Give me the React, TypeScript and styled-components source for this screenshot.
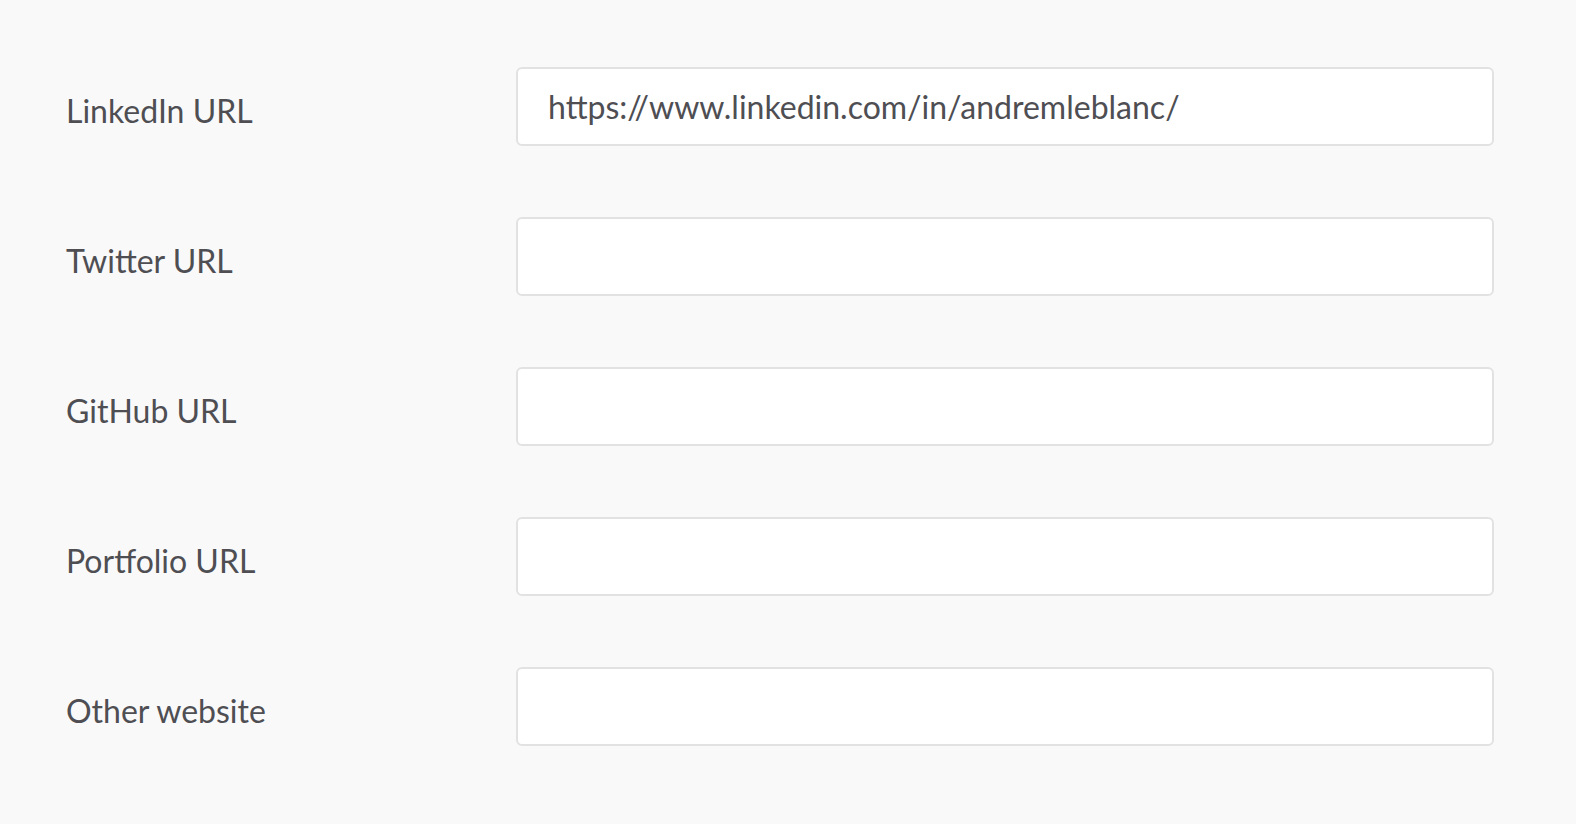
import React from "react";
import styled, { createGlobalStyle } from "styled-components";

const Global = createGlobalStyle`
  html, body { margin: 0; padding: 0; background: #f9f9f9; }
  body { font-family: Lato, "Open Sans", sans-serif; }
`;

const Page = styled.div`
  padding: 67px 82px 60px 66px;
  display: flex;
  flex-direction: column;
  gap: 71px;
`;

const Row = styled.div`
  display: grid;
  grid-template-columns: 450px 1fr;
  align-items: center;
`;

const Label = styled.label`
  font-family: Lato, sans-serif;
  font-size: 32px;
  color: #4e4e53;
  padding-top: 7px;
`;

const Input = styled.input`
  box-sizing: border-box;
  width: 100%;
  height: 79px;
  border: 2px solid #e2e2e2;
  border-radius: 6px;
  background: #ffffff;
  padding: 0 30px;
  font-family: Lato, sans-serif;
  font-size: 32px;
  color: #4e4e53;
  outline: none;
`;

const fields = [
  { label: "LinkedIn URL", value: "https://www.linkedin.com/in/andremleblanc/" },
  { label: "Twitter URL", value: "" },
  { label: "GitHub URL", value: "" },
  { label: "Portfolio URL", value: "" },
  { label: "Other website", value: "" },
];

export default function App() {
  return (
    <>
      <Global />
      <Page>
        {fields.map((f) => (
          <Row key={f.label}>
            <Label>{f.label}</Label>
            <Input defaultValue={f.value} />
          </Row>
        ))}
      </Page>
    </>
  );
}
